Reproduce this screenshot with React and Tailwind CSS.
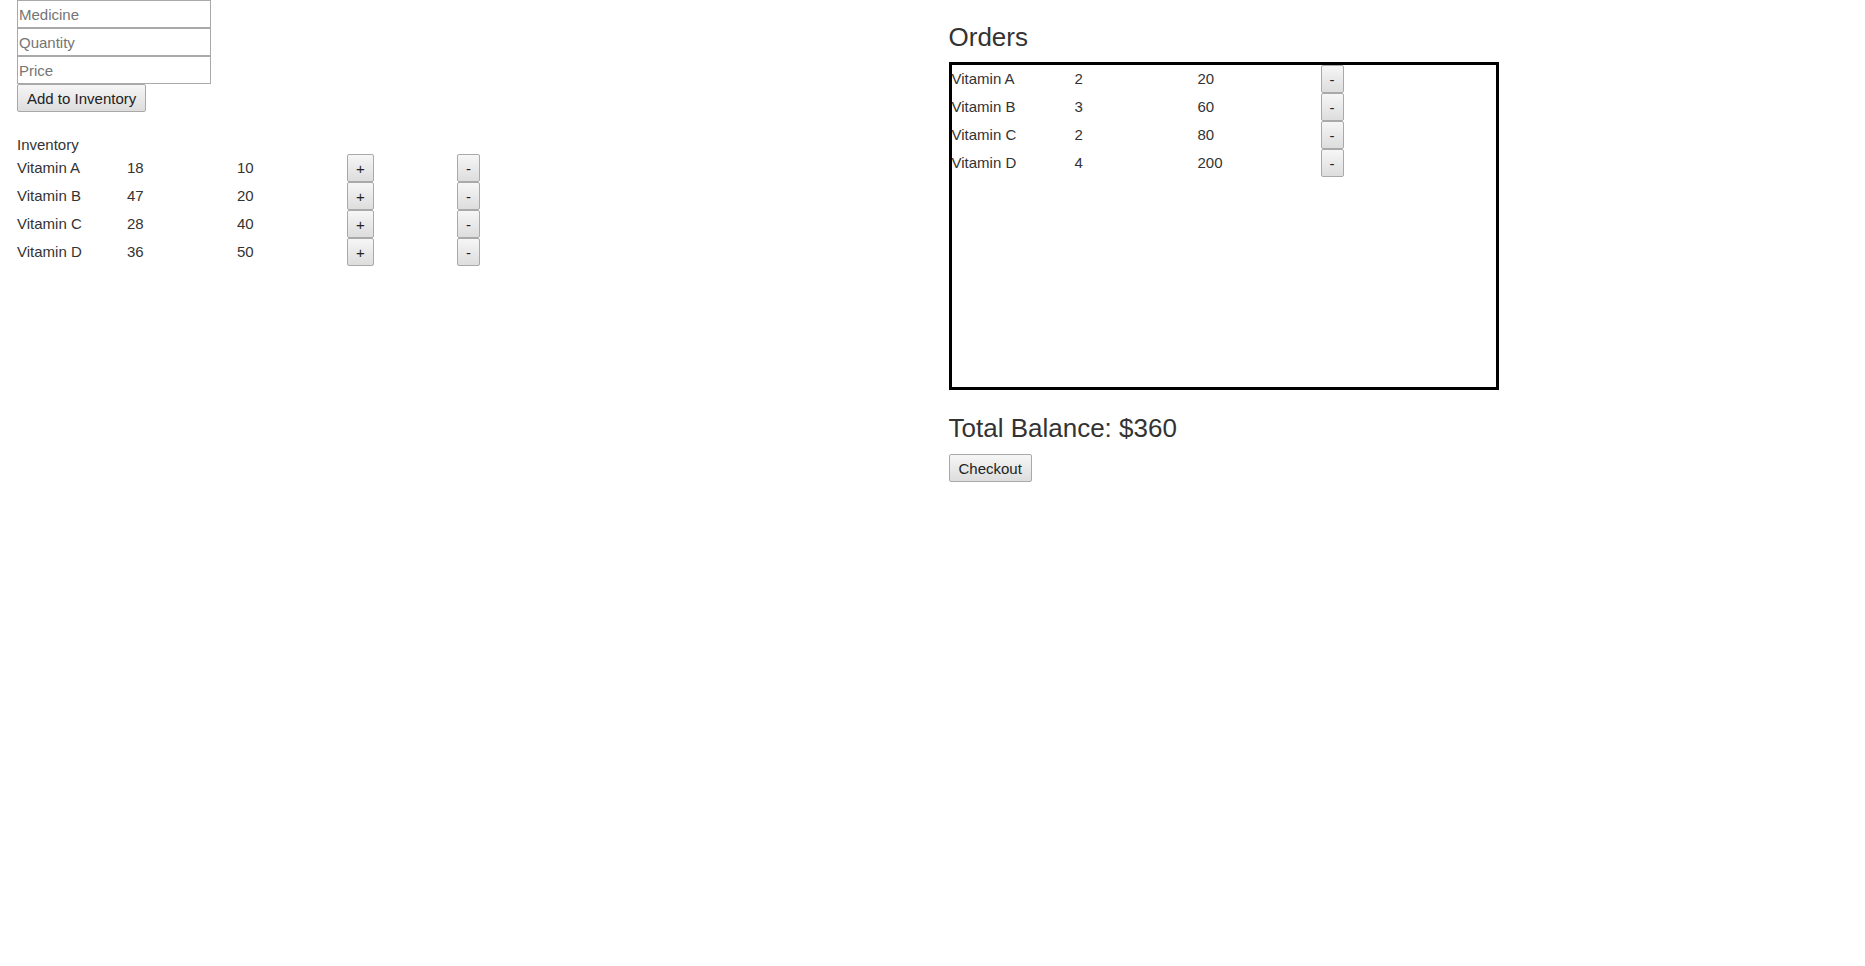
import React from 'react';

const inventory = [
  { name: 'Vitamin A', qty: 18, price: 10 },
  { name: 'Vitamin B', qty: 47, price: 20 },
  { name: 'Vitamin C', qty: 28, price: 40 },
  { name: 'Vitamin D', qty: 36, price: 50 },
];

const orders = [
  { name: 'Vitamin A', qty: 2, total: 20 },
  { name: 'Vitamin B', qty: 3, total: 60 },
  { name: 'Vitamin C', qty: 2, total: 80 },
  { name: 'Vitamin D', qty: 4, total: 200 },
];

const btn =
  'h-[28px] border border-[#a9a9a9] rounded-[2px] bg-gradient-to-b from-[#f6f6f6] to-[#dddddd] text-[15px] text-[#222] leading-none';

const input =
  'block w-[194px] h-[28px] px-[1px] border border-[#a9a9a9] text-[15px] text-[#333] placeholder:text-[#757575] outline-none';

const App = () => (
  <div className="grid grid-cols-2 min-h-screen bg-white text-[#333] text-[15px] font-['Liberation_Sans',Arial,sans-serif]">
    <section className="pl-[17px]">
      <input className={input} placeholder="Medicine" />
      <input className={input} placeholder="Quantity" />
      <input className={input} placeholder="Price" />
      <button className={`${btn} px-[9px]`}>Add to Inventory</button>

      <div className="mt-[24px] h-[18px] leading-[17px]">Inventory</div>
      <div className="flex flex-col">
        {inventory.map((item) => (
          <div key={item.name} className="flex items-center h-[28px]">
            <span className="w-[110px]">{item.name}</span>
            <span className="w-[110px]">{item.qty}</span>
            <span className="w-[110px]">{item.price}</span>
            <span className="w-[110px]">
              <button className={`${btn} px-[8px]`}>+</button>
            </span>
            <span>
              <button className={`${btn} px-[8px]`}>-</button>
            </span>
          </div>
        ))}
      </div>
    </section>

    <section className="pl-[16px] pt-[22px]">
      <h2 className="text-[26px] leading-[30px] text-[#333]">Orders</h2>
      <div className="mt-[10px] w-[550px] h-[328px] border-[3px] border-black">
        {orders.map((item) => (
          <div key={item.name} className="flex items-center h-[28px]">
            <span className="w-[123px]">{item.name}</span>
            <span className="w-[123px]">{item.qty}</span>
            <span className="w-[123px]">{item.total}</span>
            <span>
              <button className={`${btn} px-[8px]`}>-</button>
            </span>
          </div>
        ))}
      </div>
      <h2 className="mt-[23px] text-[26px] leading-[30px] text-[#333]">Total Balance: $360</h2>
      <button className={`${btn} px-[9px] mt-[11px]`}>Checkout</button>
    </section>
  </div>
);

export default App;
